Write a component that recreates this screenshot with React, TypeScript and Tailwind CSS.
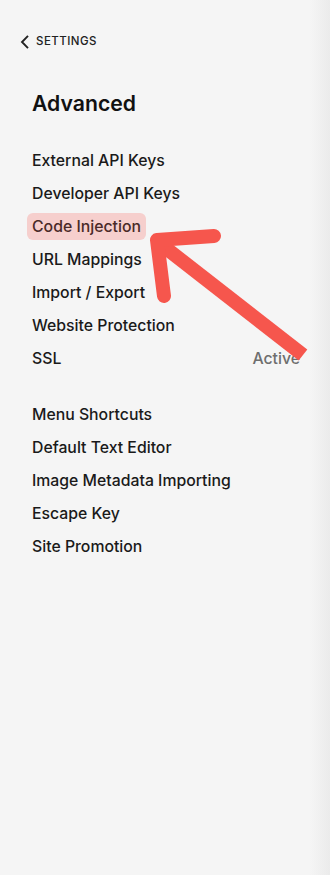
import React from "react";

const group1 = [
  "External API Keys",
  "Developer API Keys",
  "Code Injection",
  "URL Mappings",
  "Import / Export",
  "Website Protection",
  "SSL",
];
const group2 = [
  "Menu Shortcuts",
  "Default Text Editor",
  "Image Metadata Importing",
  "Escape Key",
  "Site Promotion",
];

function Item({ label }: { label: string }) {
  const active = label === "Code Injection";
  return (
    <div className="h-[33px] flex items-center justify-between">
      <span
        className={
          active
            ? "-ml-[5px] px-[5px] h-[27px] flex items-center rounded-[6px] bg-[#f6cfcd] text-[#4a2a28]"
            : "text-[#1a1a1a]"
        }
      >
        {label}
      </span>
      {label === "SSL" && <span className="text-[#6e6e6e] pr-[30px]">Active</span>}
    </div>
  );
}

export default function App() {
  return (
    <div
      className="relative w-[330px] h-[875px] overflow-hidden bg-[linear-gradient(to_right,#f5f5f5_0px,#f5f5f5_310px,#ebebeb_330px)]"
      style={{ fontFamily: "Inter, 'Noto Sans', sans-serif" }}
    >
      <div className="pt-[33px] pl-[19px] flex items-center gap-[5px] text-[11.5px] tracking-[0.04em] font-medium text-[#222]">
        <svg width="12" height="16" viewBox="0 0 12 16" fill="none">
          <path d="M9 1.8L3 8L9 14.2" stroke="#222" strokeWidth="1.9" />
        </svg>
        <span>SETTINGS</span>
      </div>
      <div className="pl-[32px] pr-0 mt-[39px]">
        <h1 className="text-[21.2px] font-semibold text-[#111] leading-[28px]">Advanced</h1>
        <div className="mt-[27px] text-[15.8px] font-medium">
          {group1.map((l) => (
            <Item key={l} label={l} />
          ))}
        </div>
        <div className="mt-[23px] text-[15.8px] font-medium">
          {group2.map((l) => (
            <Item key={l} label={l} />
          ))}
        </div>
      </div>
      <svg
        className="absolute left-0 top-0 pointer-events-none"
        width="330"
        height="875"
        viewBox="0 0 330 875"
      >
        <g stroke="#f6564d" strokeWidth="14" strokeLinecap="round" strokeLinejoin="round" fill="none">
          <path d="M303 355 L158 242" strokeLinecap="butt" />
          <path d="M164 296 L157 240 L214 236" />
        </g>
      </svg>
    </div>
  );
}
